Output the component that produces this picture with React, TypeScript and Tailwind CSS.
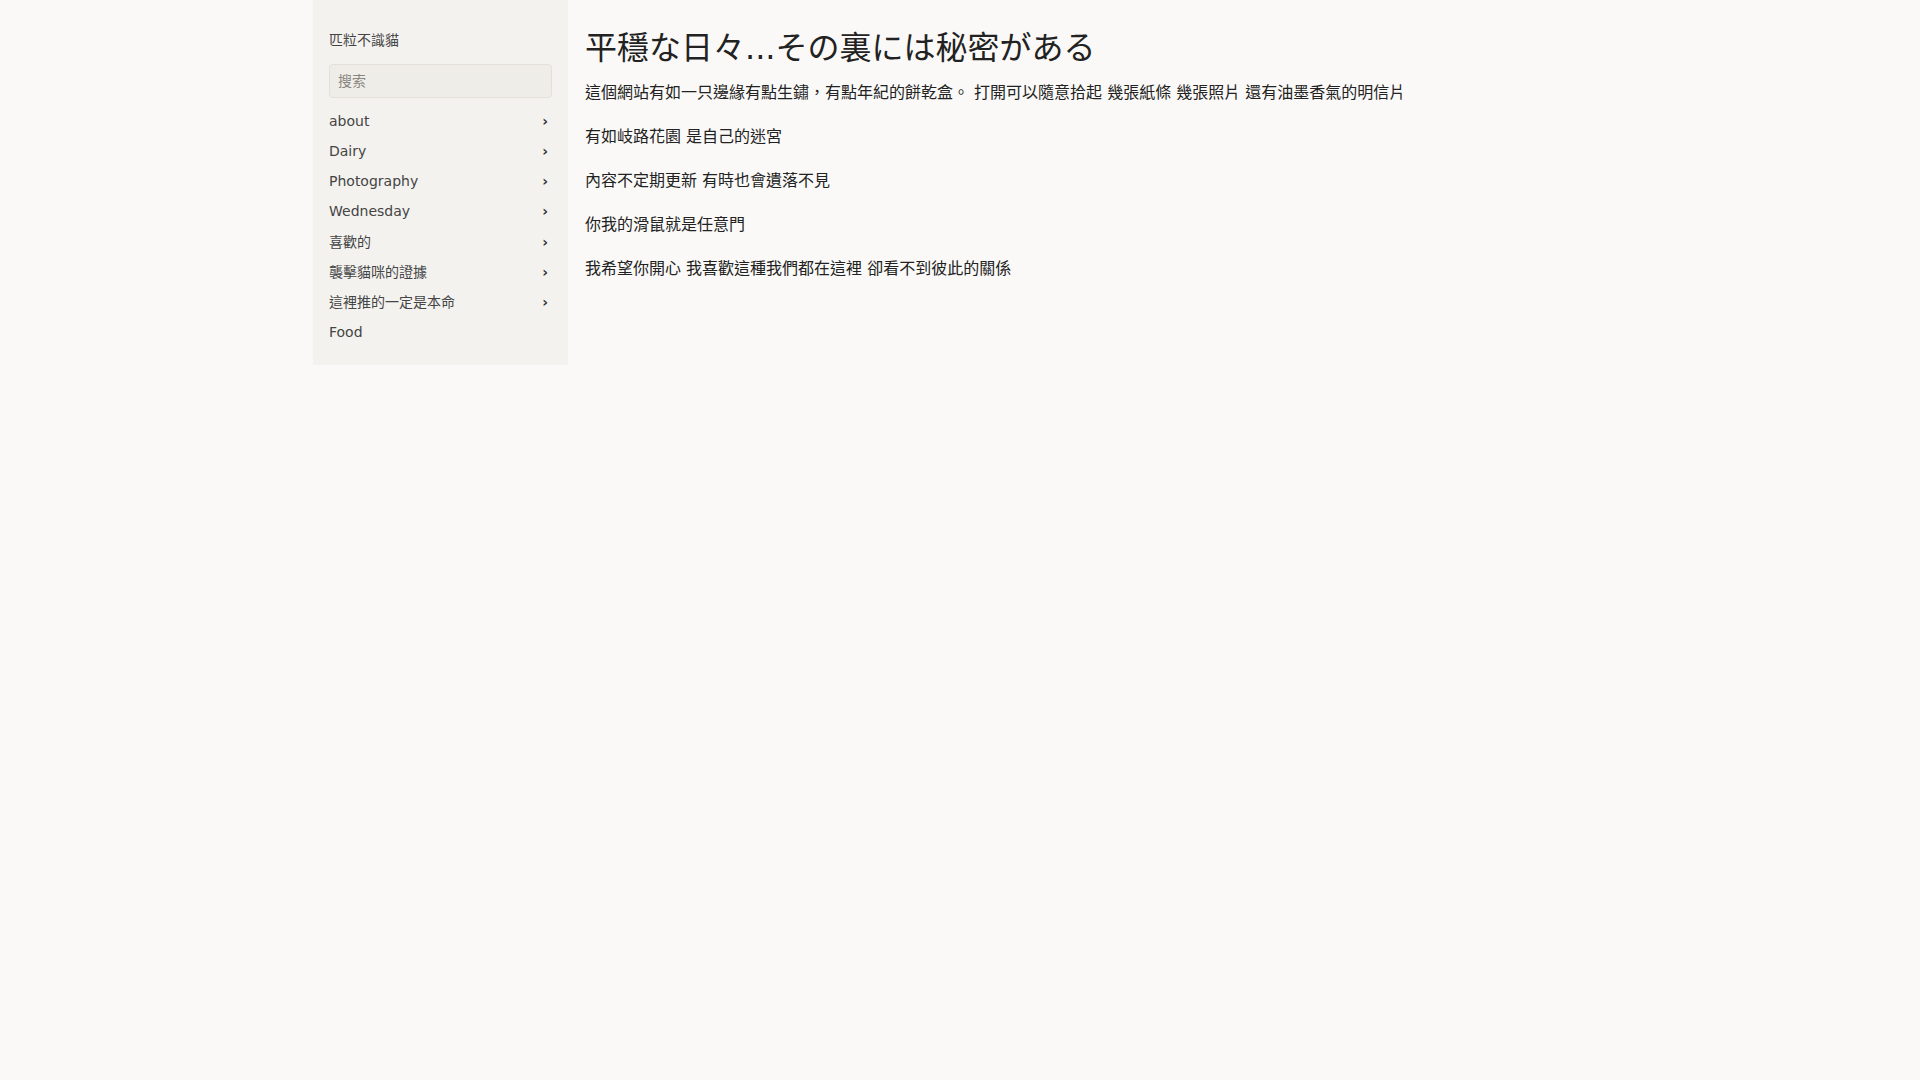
const menu = [
  { label: "about", sub: true },
  { label: "Dairy", sub: true },
  { label: "Photography", sub: true },
  { label: "Wednesday", sub: true },
  { label: "喜歡的", sub: true },
  { label: "襲擊貓咪的證據", sub: true },
  { label: "這裡推的一定是本命", sub: true },
  { label: "Food", sub: false },
];

const paragraphs = [
  "這個網站有如一只邊緣有點生鏽，有點年紀的餅乾盒。 打開可以隨意拾起 幾張紙條 幾張照片 還有油墨香氣的明信片",
  "有如岐路花園 是自己的迷宮",
  "內容不定期更新 有時也會遺落不見",
  "你我的滑鼠就是任意門",
  "我希望你開心 我喜歡這種我們都在這裡 卻看不到彼此的關係",
];

function Sidebar() {
  return (
    <aside className="w-[255px] shrink-0 self-start bg-[#f3f2ef] px-4 pt-[30px] pb-[17px]">
      <div className="text-[14px] leading-5 text-[#444]">匹粒不識貓</div>
      <input
        type="text"
        placeholder="搜索"
        className="mt-[14px] h-[34px] w-full rounded-[4px] border border-[#e3e0da] bg-[#efede8] px-2 text-[14px] text-[#444] placeholder:text-[#8a8782] outline-none"
      />
      <ul className="mt-[8px]">
        {menu.map((m) => (
          <li
            key={m.label}
            className="flex h-[30.25px] items-center justify-between text-[14px] text-[#444]"
          >
            <span>{m.label}</span>
            {m.sub && <span className="pr-[4px] text-[14px] font-semibold text-[#333]">›</span>}
          </li>
        ))}
      </ul>
    </aside>
  );
}

export default function App() {
  return (
    <div
      className="min-h-screen bg-[#faf9f7] text-[#222]"
      style={{ fontFamily: '"DejaVu Sans", "Noto Sans CJK TC", sans-serif' }}
    >
      <div className="mx-auto flex w-[1294px]">
        <Sidebar />
        <main className="flex-1 pl-[17px]">
          <h1 className="mt-[30px] mb-[13px] text-[32px] leading-[36px] font-normal text-[#222]">
            平穩な日々...その裏には秘密がある
          </h1>
          {paragraphs.map((p) => (
            <p key={p} className="mb-4 text-[16px] leading-7">
              {p}
            </p>
          ))}
        </main>
      </div>
    </div>
  );
}
